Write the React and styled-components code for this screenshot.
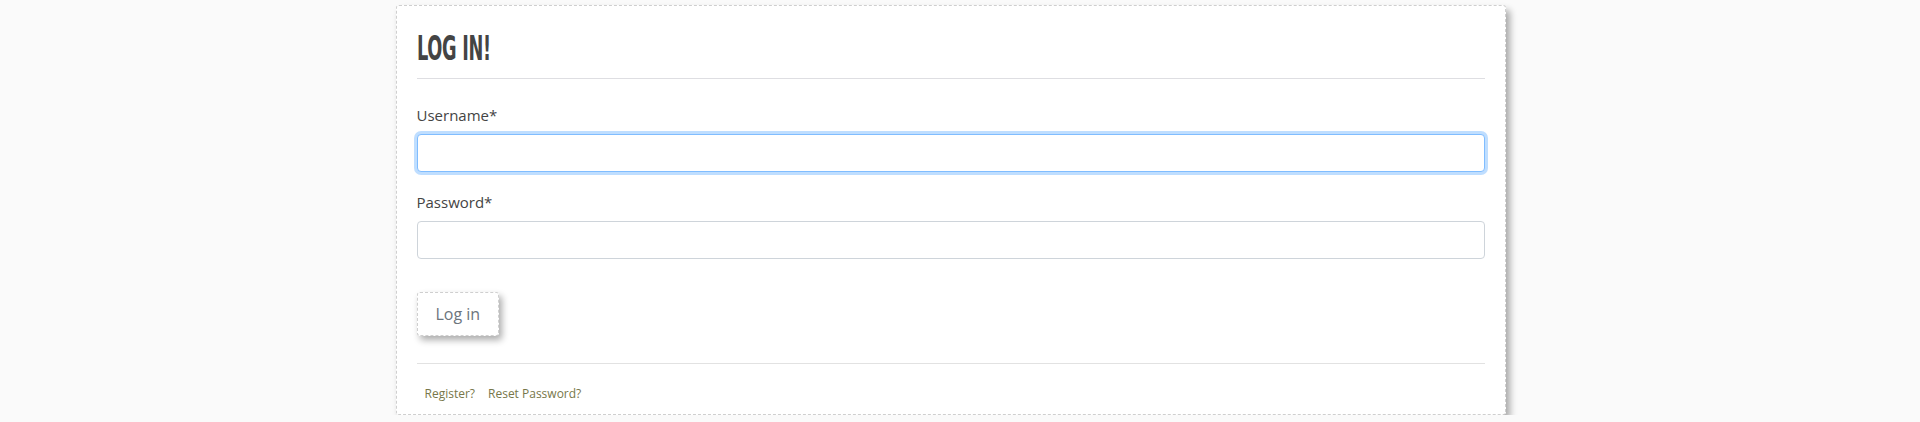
import React from "react";
import styled, { createGlobalStyle } from "styled-components";

const GlobalStyle = createGlobalStyle`
  html, body {
    margin: 0;
    padding: 0;
    background: #fafafa;
    font-family: "Open Sans", "Noto Sans", sans-serif;
  }
`;

// leave room like a scrollbar, so the card sits where it does in the page
const Page = styled.div`
  padding-right: 19px;
  padding-top: 5px;
`;

const Card = styled.div`
  box-sizing: border-box;
  width: 1110px;
  margin: 0 auto;
  background: #fff;
  border: 1px dashed #cfcfcf;
  border-radius: 3px;
  box-shadow: 4px 5px 7px rgba(0, 0, 0, 0.33);
  padding: 22px 20px 10px 20px;
`;

const Title = styled.h1`
  margin: 0;
  height: 40px;
  line-height: 40px;
  font-family: "Liberation Sans Narrow", "DejaVu Sans Condensed", sans-serif;
  font-weight: 700;
  font-size: 34px;
  color: #444;
  letter-spacing: -0.5px;
  display: inline-block;
  transform: scaleX(0.58);
  transform-origin: left center;
`;

const Rule = styled.hr`
  border: none;
  border-top: 1px solid ${(p) => p.tone || "#dedee2"};
  margin: ${(p) => p.gap || "10px 0 0 0"};
`;

const Group = styled.div`
  margin-top: ${(p) => p.top || "0"};
`;

const Label = styled.label`
  display: block;
  font-size: 15px;
  line-height: 24px;
  color: #444;
  margin-bottom: 7px;
`;

const Input = styled.input`
  box-sizing: border-box;
  display: block;
  width: 100%;
  height: 38px;
  padding: 6px 12px;
  font-family: inherit;
  font-size: 16px;
  color: #444;
  background: #fff;
  border: 1px solid ${(p) => (p.active ? "#80bdff" : "#ced4da")};
  border-radius: 4px;
  box-shadow: ${(p) => (p.active ? "0 0 0 3px rgba(0, 123, 255, 0.25)" : "none")};
  outline: none;

  &:focus {
    border-color: #80bdff;
    box-shadow: 0 0 0 3px rgba(0, 123, 255, 0.25);
  }
`;

const Button = styled.button`
  margin-top: 33px;
  height: 44px;
  padding: 0 18px;
  background: #fff;
  border: 1px dashed #cfcfcf;
  border-radius: 3px;
  box-shadow: 3px 4px 7px rgba(0, 0, 0, 0.33);
  font-family: inherit;
  font-size: 16px;
  color: #6c757d;
  cursor: pointer;
`;

const Links = styled.div`
  display: flex;
  gap: 13px;
  padding-left: 8px;
  margin-top: 20px;
  line-height: 20px;
`;

const Link = styled.a`
  font-size: 12px;
  color: #77774a;
  text-decoration: none;
`;

export default function App() {
  return (
    <>
      <GlobalStyle />
      <Page>
        <Card>
          <Title>LOG IN!</Title>
          <Rule />
          <Group top="24px">
            <Label htmlFor="username">Username*</Label>
            <Input id="username" type="text" active autoFocus />
          </Group>
          <Group top="18px">
            <Label htmlFor="password">Password*</Label>
            <Input id="password" type="password" />
          </Group>
          <Button type="submit">Log in</Button>
          <Rule tone="#e2e2e2" gap="27px 0 0 0" />
          <Links>
            <Link href="#register">Register?</Link>
            <Link href="#reset">Reset Password?</Link>
          </Links>
        </Card>
      </Page>
    </>
  );
}
